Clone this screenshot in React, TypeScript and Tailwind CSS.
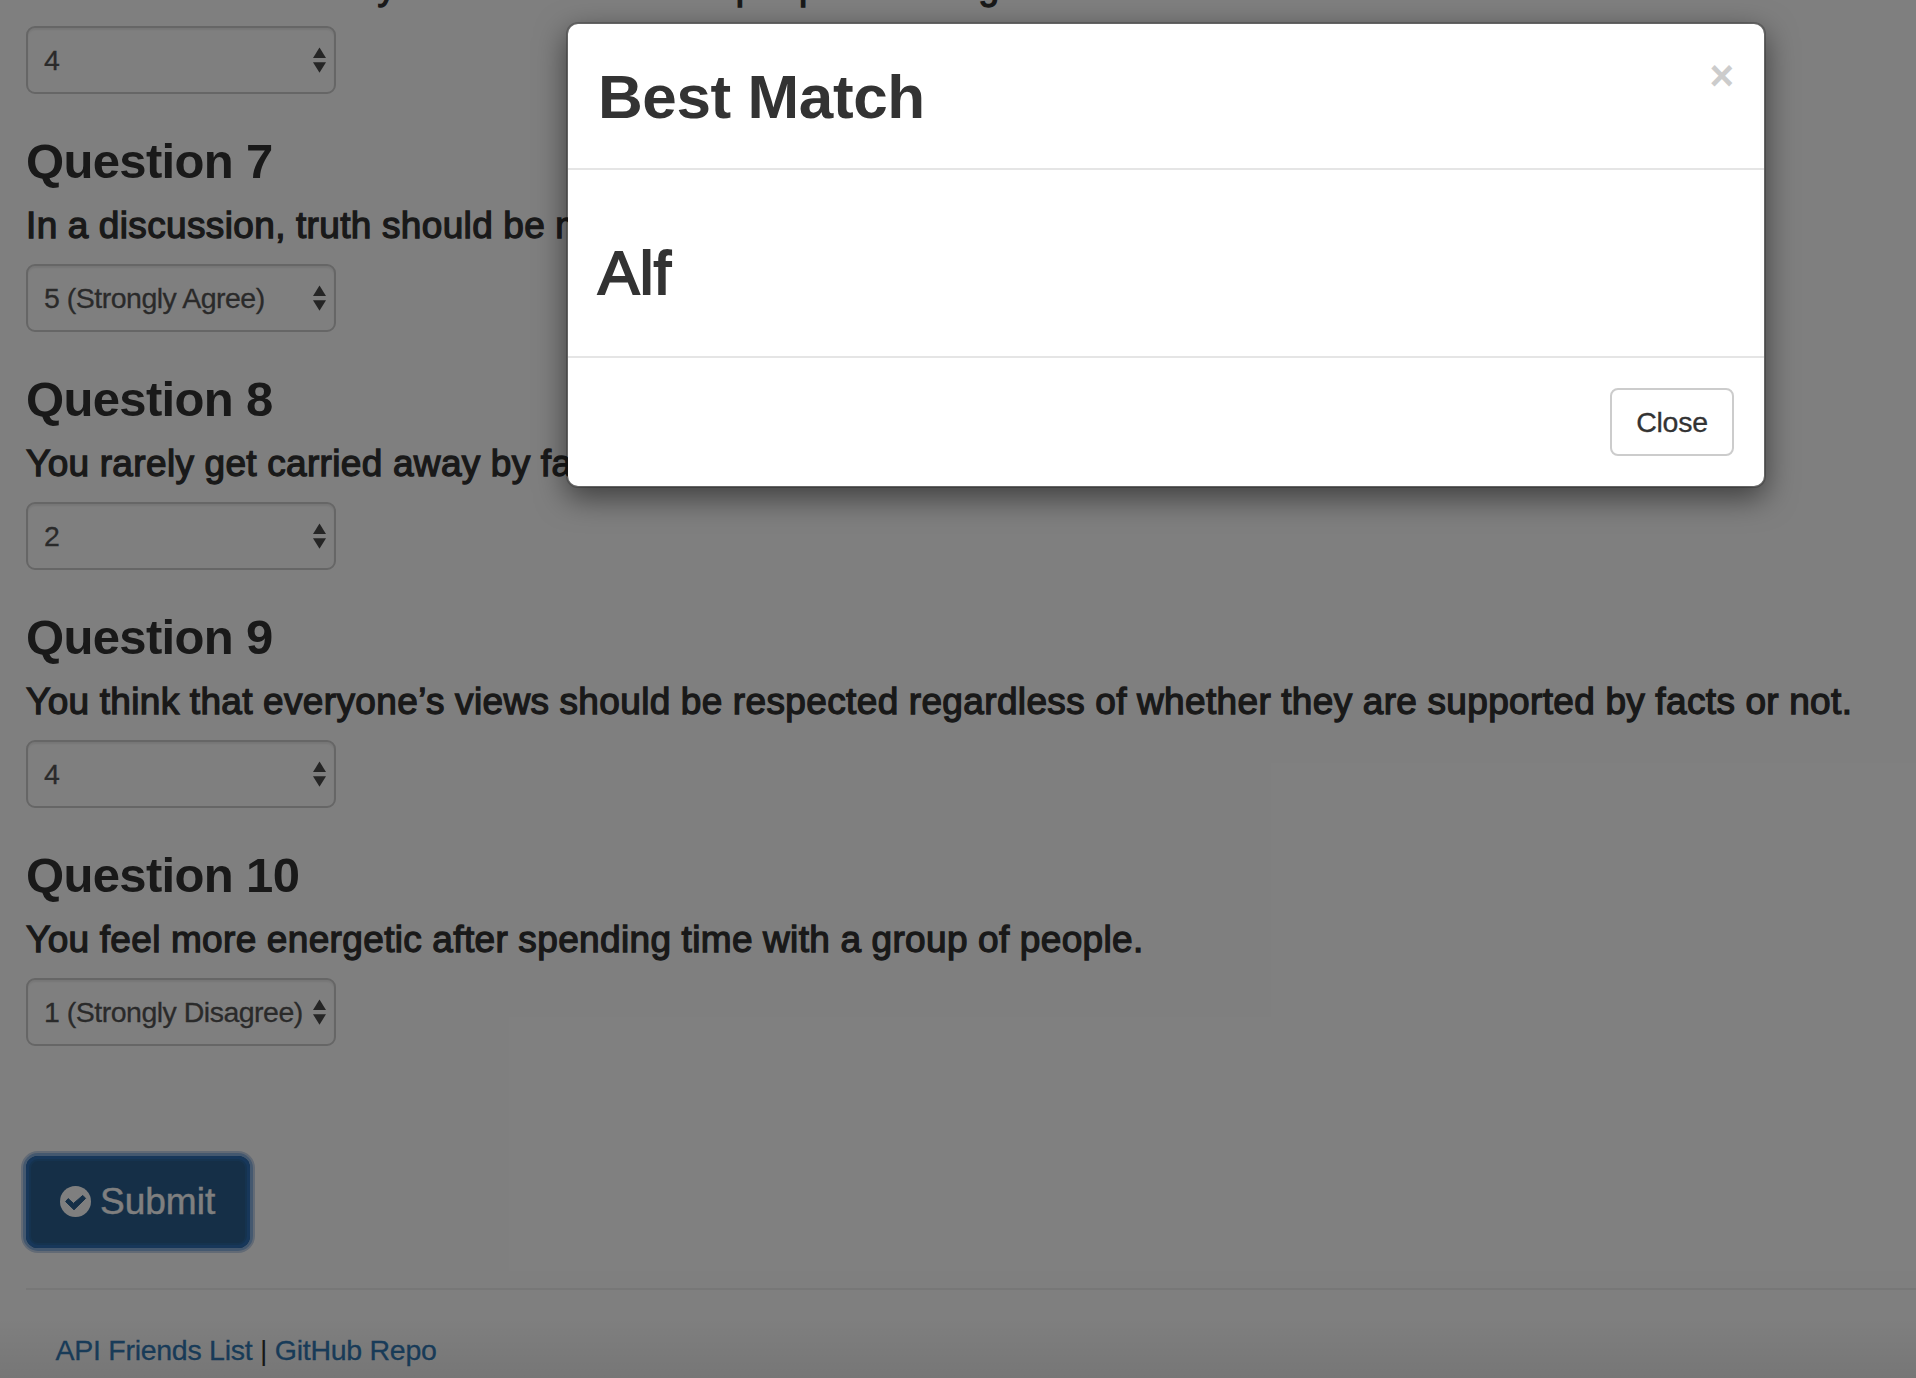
const questions = [
  { id: 6, text: 'It is often difficult for you to relate to other people’s feelings.', answer: '4' },
  { id: 7, text: 'In a discussion, truth should be more important than people’s sensitivities.', answer: '5 (Strongly Agree)' },
  { id: 8, text: 'You rarely get carried away by fantasies and ideas.', answer: '2' },
  { id: 9, text: 'You think that everyone’s views should be respected regardless of whether they are supported by facts or not.', answer: '4' },
  { id: 10, text: 'You feel more energetic after spending time with a group of people.', answer: '1 (Strongly Disagree)' },
];

function SelectBox({ value }: { value: string }) {
  return (
    <div className="flex h-[68px] w-[310px] items-center justify-between rounded-[9px] border-2 border-[#ccc] pr-2 pl-4 text-[28.5px] leading-10 tracking-[-0.5px] text-[#555] shadow-[inset_0_2px_2px_rgba(0,0,0,0.075)] [-webkit-text-stroke:0.3px_#555]">
      <span className="whitespace-nowrap">{value}</span>
      <svg className="h-[26px] w-[13px] shrink-0" viewBox="0 0 13 26" fill="#4a4a4a">
        <path d="M6.5 .5 13 11H0z" />
        <path d="M0 15.2h13L6.5 25.7z" />
      </svg>
    </div>
  );
}

function Question({ id, text, answer }: { id: number; text: string; answer: string }) {
  return (
    <section className="group pt-[41px]">
      <h3 className="text-[49px] leading-[53px] font-bold tracking-[-0.65px]">Question {id}</h3>
      <h4 className="mt-[18px] mb-[18px] text-[37px] leading-10 tracking-[0.36px] whitespace-nowrap [word-spacing:-0.5px] [-webkit-text-stroke:1.3px_#333] group-first:mt-[17px] group-first:mb-[19px] group-first:ml-[3px] group-first:tracking-[0.48px]">
        {text}
      </h4>
      <SelectBox value={answer} />
    </section>
  );
}

function CheckBadge() {
  return (
    <svg className="-mt-[2px] size-[31px]" viewBox="0 0 31 31">
      <circle cx="15.5" cy="15.5" r="15.5" fill="#fff" />
      <path
        d="M8.2 12.6 13.5 17.4 22.8 9.4 25.6 12.4 14 23.8 5.6 15.6z"
        fill="#2a5f8f"
        stroke="#2a5f8f"
        strokeWidth="1"
        strokeLinejoin="round"
      />
    </svg>
  );
}

function Modal() {
  return (
    <div className="absolute top-[22px] left-[566px] flex h-[466px] w-[1200px] flex-col rounded-[12px] border-2 border-black/20 bg-white bg-clip-padding shadow-[0_10px_30px_rgba(0,0,0,0.5)]">
      <div className="flex h-[146px] justify-between border-b-2 border-[#e5e5e5] px-[30px]">
        <h2 className="mt-10 text-[62px] leading-[66px] font-bold tracking-[-0.4px]">Best Match</h2>
        <button className="mt-[31px] h-[42px] text-[42px] leading-[42px] font-bold text-[#ccc]" aria-label="Close">
          ×
        </button>
      </div>
      <div className="h-[186px] px-[30px] pt-[70px]">
        <h2 className="text-[62px] leading-[66px] tracking-[0.3px] [-webkit-text-stroke:2px_#333]">Alf</h2>
      </div>
      <div className="flex grow justify-end border-t-2 border-[#e5e5e5] p-[30px]">
        <button className="h-[68px] w-[124px] rounded-[8px] border-2 border-[#ccc] text-[28.5px] leading-10 tracking-[-0.25px] [-webkit-text-stroke:0.3px_#333]">
          Close
        </button>
      </div>
    </div>
  );
}

export default function App() {
  return (
    <div className="relative h-[1378px] w-[1916px] overflow-hidden bg-white font-['Liberation_Sans',Arial,sans-serif] text-[#333]">
      <main className="-mt-[144px] pl-[26px]">
        <div>
          {questions.map((q) => (
            <Question key={q.id} {...q} />
          ))}
        </div>
        <button className="mt-[110px] flex h-[92px] w-[224px] items-center rounded-[12px] bg-[#2a5f8f] pl-[34px] text-[37px] text-white shadow-[inset_0_0_0_3px_#2e6eb4,inset_0_0_0_5px_#2b679f,0_0_0_3px_#88b0de,0_0_0_5px_#c4d4ea] [-webkit-text-stroke:0.4px_#fff]">
          <CheckBadge />
          <span className="ml-[9px]">Submit</span>
        </button>
        <div className="mt-10 h-[2px] bg-[#eee]" />
        <footer className="mt-10 pl-[29.5px] text-[28.5px] leading-10 tracking-[-0.27px]">
          <a className="text-[#337ab7] [-webkit-text-stroke:0.3px_#337ab7]">API Friends List</a> |{' '}
          <a className="text-[#337ab7] [-webkit-text-stroke:0.3px_#337ab7]">GitHub Repo</a>
        </footer>
      </main>
      <div className="absolute inset-0 bg-black/50" />
      <div className="absolute inset-x-0 bottom-0 h-[60px] bg-linear-to-b from-transparent to-black/7" />
      <Modal />
    </div>
  );
}
